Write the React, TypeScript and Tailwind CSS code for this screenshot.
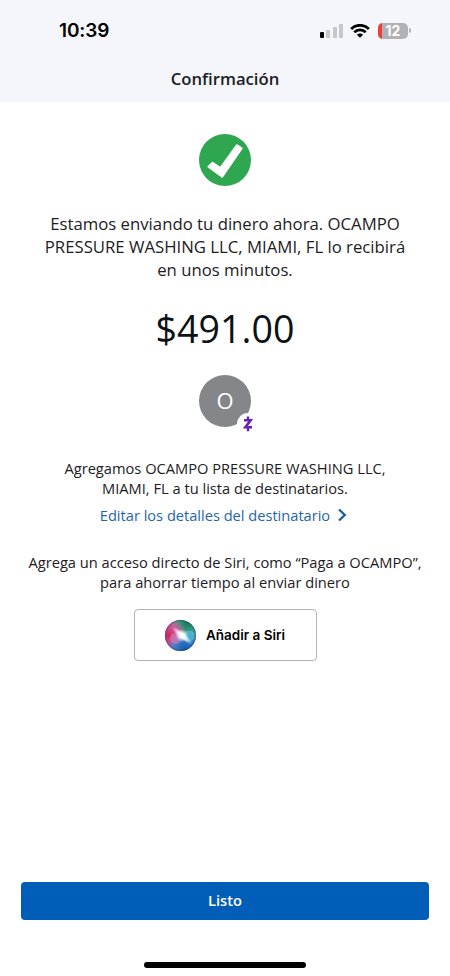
const RECIPIENT = 'OCAMPO PRESSURE WASHING LLC, MIAMI, FL';

const StatusBar = () => {
  return (
    <div className="flex h-[60px] items-center justify-between pl-[59px] pr-[39px] pt-px">
      <span className="font-['Inter',sans-serif] text-[19px] font-semibold leading-6 tracking-[-0.1px] text-black">
        10:39
      </span>
      <div className="flex items-center">
        <div className="flex h-[15px] items-end gap-[2.4px]">
          <span className="h-[6px] w-1 rounded-[1px] bg-black" />
          <span className="h-[8px] w-1 rounded-[1px] bg-[#c6c7cb]" />
          <span className="h-[11px] w-1 rounded-[1px] bg-[#c6c7cb]" />
          <span className="h-[14px] w-1 rounded-[1px] bg-[#c6c7cb]" />
        </div>
        <svg className="ml-[7px] h-[14px] w-5" viewBox="0 0 20 14" fill="none">
          <path d="M1.2 4.9a12.5 12.5 0 0 1 17.6 0" stroke="#000" strokeWidth="2.8" />
          <path d="M4.3 8.3a8 8 0 0 1 11.4 0" stroke="#000" strokeWidth="2.7" />
          <path d="M10 13.8 6.9 10.7a4.4 4.4 0 0 1 6.2 0Z" fill="#000" />
        </svg>
        <div className="ml-2 flex h-4 w-[30px] overflow-hidden rounded-[5px] bg-[#b0b1b4]">
          <span className="h-full w-1 bg-[#e8403c]" />
          <span className="flex-1 pr-1 text-center font-['Inter',sans-serif] text-[14px] font-bold leading-4 text-white">
            12
          </span>
        </div>
        <span className="ml-px h-[5px] w-[2px] rounded-r-full bg-[#b0b1b4]" />
      </div>
    </div>
  );
};

const SuccessIcon = () => {
  return (
    <svg className="size-[52px]" viewBox="0 0 52 52">
      <circle cx="26" cy="26" r="26" fill="#2ea750" />
      <path
        d="M13.6 28.8 21.4 34 38 11.2 42.6 14.4 23.2 42.8 9.4 32.8Z"
        fill="#fff"
        stroke="#fff"
        strokeWidth="2"
        strokeLinejoin="round"
      />
    </svg>
  );
};

const Avatar = () => {
  return (
    <div className="relative flex size-[52px] items-center justify-center rounded-full bg-[#84878a] pb-[2px] text-[22px] leading-none text-white">
      O
      <span className="absolute left-[38px] top-[38px] flex size-[22px] items-center justify-center rounded-full bg-white">
        <svg className="h-4 w-[10px]" viewBox="0 0 10 16" fill="none" stroke="#6520bd">
          <path d="M1 4.3h6.6L2.4 11.3H9" strokeWidth="2.6" />
          <path d="M5 .4v3.4M5 11.8v3.4" strokeWidth="2.4" />
        </svg>
      </span>
    </div>
  );
};

const SiriOrb = () => {
  return (
    <svg className="size-[31px]" viewBox="0 0 31 31">
      <defs>
        <radialGradient id="pink" cx="0.1" cy="0.5" r="0.6">
          <stop offset="0" stopColor="#cf2560" />
          <stop offset="0.6" stopColor="#e0559a" stopOpacity="0.85" />
          <stop offset="1" stopColor="#e0559a" stopOpacity="0" />
        </radialGradient>
        <radialGradient id="green" cx="0.7" cy="0.1" r="0.65">
          <stop offset="0" stopColor="#147a5e" />
          <stop offset="0.5" stopColor="#379f80" stopOpacity="0.9" />
          <stop offset="1" stopColor="#379f80" stopOpacity="0" />
        </radialGradient>
        <radialGradient id="blue" cx="0.65" cy="0.95" r="0.6">
          <stop offset="0" stopColor="#1457a8" />
          <stop offset="0.6" stopColor="#2d7fd0" stopOpacity="0.85" />
          <stop offset="1" stopColor="#2d7fd0" stopOpacity="0" />
        </radialGradient>
        <radialGradient id="glow">
          <stop offset="0" stopColor="#fff" />
          <stop offset="0.35" stopColor="#fff" stopOpacity="0.85" />
          <stop offset="1" stopColor="#fff" stopOpacity="0" />
        </radialGradient>
        <radialGradient id="rim">
          <stop offset="0.85" stopColor="#23304f" stopOpacity="0" />
          <stop offset="1" stopColor="#23304f" stopOpacity="0.4" />
        </radialGradient>
      </defs>
      <circle cx="15.5" cy="15.5" r="15.5" fill="#6d8fba" />
      <circle cx="15.5" cy="15.5" r="15.5" fill="url(#green)" />
      <circle cx="15.5" cy="15.5" r="15.5" fill="url(#pink)" />
      <circle cx="15.5" cy="15.5" r="15.5" fill="url(#blue)" />
      <circle cx="24" cy="16" r="5.5" fill="#4fc0e0" fillOpacity="0.7" />
      <circle cx="10.5" cy="18.5" r="5.5" fill="#ee86c0" fillOpacity="0.5" />
      <ellipse cx="17" cy="15.5" rx="13" ry="3.5" fill="url(#glow)" transform="rotate(40 17 15.5)" />
      <circle cx="17" cy="15.5" r="6.5" fill="url(#glow)" />
      <circle cx="15.5" cy="15.5" r="15.5" fill="url(#rim)" />
    </svg>
  );
};

const App = () => {
  return (
    <div className="flex h-[976px] w-[450px] flex-col bg-white font-['Open_Sans',sans-serif] text-[#1c2023]">
      <header className="h-[102px] bg-[#f4f6fb]">
        <StatusBar />
        <h1 className="pt-[7px] text-center text-[16.7px] font-semibold leading-6 text-[#1c2024]">
          Confirmación
        </h1>
      </header>

      <main className="flex flex-1 flex-col items-center pt-8 text-center">
        <SuccessIcon />
        <p className="mt-[27px] w-[380px] text-[16.74px] leading-[22.8px]">
          {`Estamos enviando tu dinero ahora. ${RECIPIENT} lo recibirá en unos minutos.`}
        </p>
        <p className="mb-5 mt-[22px] text-[37.6px] leading-[52px] text-[#0d1216]">$491.00</p>
        <Avatar />
        <p className="mt-[31px] w-[350px] text-[14.66px] leading-5">
          {`Agregamos ${RECIPIENT} a tu lista de destinatarios.`}
        </p>
        <a href="#" className="mt-[7px] flex items-center text-[14.62px] leading-5 text-[#1f65a8]">
          Editar los detalles del destinatario
          <svg className="ml-2 mr-[3px] h-[14px] w-[9px]" viewBox="0 0 9 14" fill="none">
            <path d="m1 1.5 5.8 5.5L1 12.5" stroke="#1d5ba5" strokeWidth="2.3" />
          </svg>
        </a>
        <p className="mt-[27px] w-[410px] text-[14.66px] leading-5">
          Agrega un acceso directo de Siri, como “Paga a OCAMPO”, para ahorrar tiempo al enviar
          dinero
        </p>
        <button className="mt-[17px] flex h-[52px] w-[183px] items-center justify-center gap-[10px] rounded-[4px] border border-[#b4b4b4] font-['Inter',sans-serif] text-[13.5px] font-semibold text-black">
          <SiriOrb />
          Añadir a Siri
        </button>
      </main>

      <footer className="flex flex-col items-center px-[21px] pb-2">
        <button className="h-[38px] w-full rounded-[4px] bg-[#005eb8] pb-px text-[14.6px] font-semibold text-white">
          Listo
        </button>
        <span className="mt-[42px] h-[6px] w-[162px] rounded-full bg-black" />
      </footer>
    </div>
  );
};

export default App;
